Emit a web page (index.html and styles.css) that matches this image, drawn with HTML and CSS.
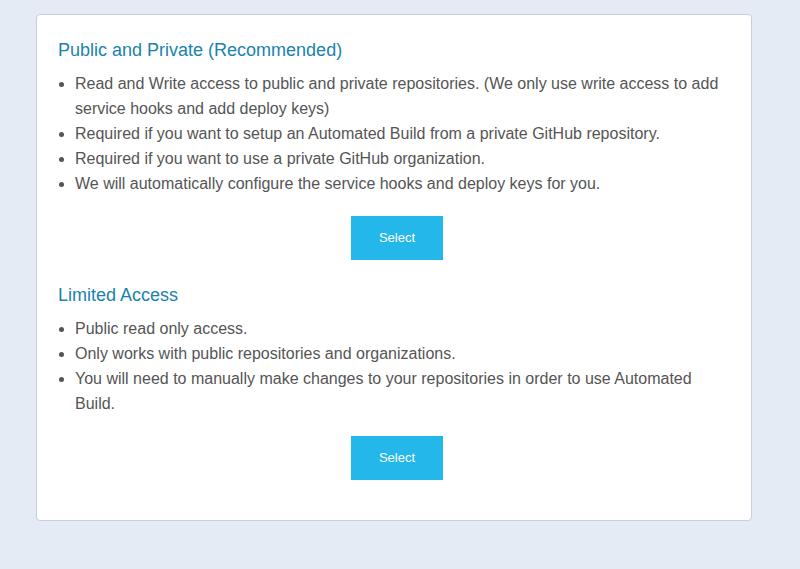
FILE: index.html
```html
<!DOCTYPE html>
<html>
<head>
<meta charset="utf-8">
<link rel="stylesheet" href="styles.css">
</head>
<body>
<div class="page">
  <div class="card">
    <section class="option">
      <h3 class="title">Public and Private (Recommended)</h3>
      <ul class="points">
        <li>Read and Write access to public and private repositories. (We only use write access to add service hooks and add deploy keys)</li>
        <li>Required if you want to setup an Automated Build from a private GitHub repository.</li>
        <li>Required if you want to use a private GitHub organization.</li>
        <li>We will automatically configure the service hooks and deploy keys for you.</li>
      </ul>
      <div class="actions"><button class="btn">Select</button></div>
    </section>
    <section class="option">
      <h3 class="title">Limited Access</h3>
      <ul class="points">
        <li>Public read only access.</li>
        <li>Only works with public repositories and organizations.</li>
        <li>You will need to manually make changes to your repositories in order to use Automated Build.</li>
      </ul>
      <div class="actions"><button class="btn">Select</button></div>
    </section>
  </div>
</div>
</body>
</html>
```
FILE: styles.css
```css
*, *::before, *::after {
  box-sizing: border-box;
}
html, body {
  margin: 0;
  padding: 0;
  background: #e4ebf4;
  font-family: "Liberation Sans", Arial, sans-serif;
  height: 100%;
}
.page {
  padding: 14px 48px 0 36px;
}
.card {
  width: 716px;
  background: #fff;
  border: 1px solid #c6cfdb;
  border-radius: 4px;
  padding: 24px 21px 40px 21px;
}
.option + .option {
  margin-top: 24px;
}
.title {
  margin: 0;
  font-size: 18px;
  font-weight: normal;
  line-height: 22px;
  color: #1a82ae;
}
.points {
  margin: 10px 0 0;
  padding-left: 17px;
  color: #555;
  font-size: 16px;
  line-height: 25px;
}
.actions {
  display: flex;
  justify-content: center;
  margin-top: 20px;
  padding-left: 6px;
}
.btn {
  width: 92px;
  height: 44px;
  border: none;
  border-radius: 0;
  background: #23b7ea;
  color: #fff;
  font-family: "Liberation Sans", Arial, sans-serif;
  font-size: 13px;
  padding: 0 0 2px;
}
```
